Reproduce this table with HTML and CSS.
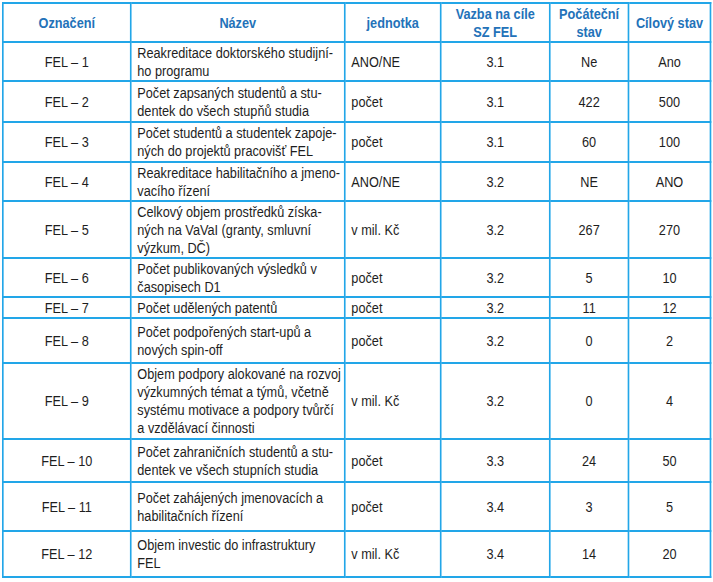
FILE: index.html
```html
<!DOCTYPE html>
<html lang="cs">
<head>
<meta charset="utf-8">
<link rel="stylesheet" href="styles.css">
</head>
<body>
<div class="wrap">
<table class="tbl">
  <colgroup>
    <col class="c1"><col class="c2"><col class="c3"><col class="c4"><col class="c5"><col class="c6">
  </colgroup>
  <thead>
    <tr class="h39">
      <th>Označení</th><th>Název</th><th>jednotka</th><th>Vazba na cíle<br>SZ FEL</th><th>Počáteční<br>stav</th><th>Cílový stav</th>
    </tr>
  </thead>
  <tbody>
    <tr class="h39"><td class="c">FEL – 1</td><td>Reakreditace doktorského studijní-<br>ho programu</td><td>ANO/NE</td><td class="c">3.1</td><td class="c">Ne</td><td class="c">Ano</td></tr>
    <tr class="h41"><td class="c">FEL – 2</td><td>Počet zapsaných studentů a stu-<br>dentek do všech stupňů studia</td><td>počet</td><td class="c">3.1</td><td class="c">422</td><td class="c">500</td></tr>
    <tr class="h40"><td class="c">FEL – 3</td><td>Počet studentů a studentek zapoje-<br>ných do projektů pracovišť FEL</td><td>počet</td><td class="c">3.1</td><td class="c">60</td><td class="c">100</td></tr>
    <tr class="h39"><td class="c">FEL – 4</td><td>Reakreditace habilitačního a jmeno-<br>vacího řízení</td><td>ANO/NE</td><td class="c">3.2</td><td class="c">NE</td><td class="c">ANO</td></tr>
    <tr class="h57"><td class="c">FEL – 5</td><td>Celkový objem prostředků získa-<br>ných na VaVaI (granty, smluvní<br>výzkum, DČ)</td><td>v mil. Kč</td><td class="c">3.2</td><td class="c">267</td><td class="c">270</td></tr>
    <tr class="h39"><td class="c">FEL – 6</td><td>Počet publikovaných výsledků v<br>časopisech D1</td><td>počet</td><td class="c">3.2</td><td class="c">5</td><td class="c">10</td></tr>
    <tr class="h21"><td class="c">FEL – 7</td><td>Počet udělených patentů</td><td>počet</td><td class="c">3.2</td><td class="c">11</td><td class="c">12</td></tr>
    <tr class="h45"><td class="c">FEL – 8</td><td>Počet podpořených start-upů a<br>nových spin-off</td><td>počet</td><td class="c">3.2</td><td class="c">0</td><td class="c">2</td></tr>
    <tr class="h76"><td class="c">FEL – 9</td><td>Objem podpory alokované na rozvoj<br>výzkumných témat a týmů, včetně<br>systému motivace a podpory tvůrčí<br>a vzdělávací činnosti</td><td>v mil. Kč</td><td class="c">3.2</td><td class="c">0</td><td class="c">4</td></tr>
    <tr class="h43"><td class="c">FEL – 10</td><td>Počet zahraničních studentů a stu-<br>dentek ve všech stupních studia</td><td>počet</td><td class="c">3.3</td><td class="c">24</td><td class="c">50</td></tr>
    <tr class="h49"><td class="c">FEL – 11</td><td>Počet zahájených jmenovacích a<br>habilitačních řízení</td><td>počet</td><td class="c">3.4</td><td class="c">3</td><td class="c">5</td></tr>
    <tr class="h46"><td class="c">FEL – 12</td><td>Objem investic do infrastruktury<br>FEL</td><td>v mil. Kč</td><td class="c">3.4</td><td class="c">14</td><td class="c">20</td></tr>
  </tbody>
</table>
</div>
</body>
</html>
```
FILE: styles.css
```css
html, body {
  margin: 0;
  padding: 0;
  background: #ffffff;
  overflow: hidden;
}
.wrap {
  padding: 2px 0 0 2px;
}
/* the source uses a narrow (condensed) face; emulate it by compressing the whole table horizontally */
.tbl {
  border-collapse: collapse;
  table-layout: fixed;
  width: 863px;
  transform: scaleX(0.82);
  transform-origin: 0 0;
  font-family: "Liberation Sans", Arial, sans-serif;
  font-size: 15.5px;
  line-height: 18px;
  color: #1e1e1e;
}
.c1 { width: 156px; }
.c2 { width: 261px; }
.c3 { width: 117px; }
.c4 { width: 133px; }
.c5 { width: 96px; }
.c6 { width: 100px; }
.tbl th, .tbl td {
  border: 2px solid #22a6e8;
  padding: 0 7px;
  vertical-align: middle;
  text-align: left;
  white-space: nowrap;
}
.tbl th {
  text-align: center;
  font-weight: bold;
  color: #2372b9;
}
.tbl td.c { text-align: center; }
.h21 { height: 21px; }
.h39 { height: 39px; }
.h40 { height: 40px; }
.h41 { height: 41px; }
.h43 { height: 43px; }
.h45 { height: 45px; }
.h46 { height: 46px; }
.h49 { height: 49px; }
.h57 { height: 57px; }
.h76 { height: 76px; }
```
